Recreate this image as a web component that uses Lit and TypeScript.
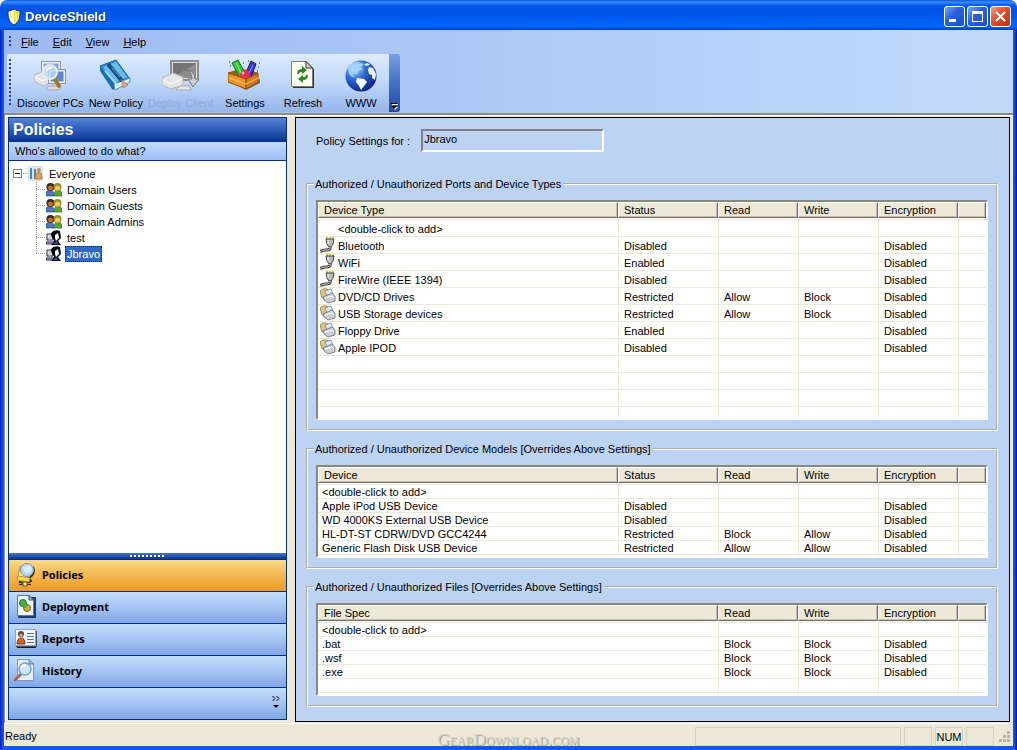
import { LitElement, html, svg, css, nothing } from "lit";
import { customElement, property } from "lit/decorators.js";
import { classMap } from "lit/directives/class-map.js";

const shieldIcon = html`<svg width="16" height="18" viewBox="0 0 16 18" aria-hidden="true">
  <path d="M8 1 C6 2 4 3 2 3 C2 10 3 14 8 17 C13 14 14 10 14 3 C12 3 10 2 8 1Z" fill="#fff" stroke="#1b3a6d" stroke-width="1"/>
  <path d="M8 2 C9.500 3 11 4 13 4 C13 10 12 13 8 16Z" fill="#f5e21c"/>
  <path d="M5 4 V11" stroke="#ffe96b" stroke-width="2"/>
  <path d="M10 5 V12" stroke="#fffbc0" stroke-width="1"/>
</svg>`;

const monitor = (x: number, y: number, w: number, h: number, screen: string) => svg`
  <rect x=${x} y=${y} width=${w} height=${h} fill="#f0f0f0" stroke="#8a97ad"/>
  <rect x=${x + 2} y=${y + 2} width=${w - 4} height=${h - 4} fill=${screen}/>`;

const toolIcons: Record<string, unknown> = {
  discover: svg`
    ${monitor(7.5, 2.5, 19, 16, "#7ea3dc")}
    <path d="M0 16 L10 12 L18 15 V23 L9 27 L0 22Z" fill="#e4e4e4" stroke="#b2b5bb"/>
    <path d="M1 18 L9 22 L17 17" fill="none" stroke="#fff"/>
    ${monitor(14.5, 10.5, 17, 14, "#5f88cc")}
    <ellipse cx="19" cy="29" rx="7" ry="2" fill="#dcdcdc" stroke="#aaa"/>
    <path d="M20 19 L25 27" stroke="#a4762d" stroke-width="4" stroke-linecap="round"/>
    <circle cx="16" cy="13" r="7" fill="#bfe0f5" fill-opacity=".8" stroke="#e2eef8" stroke-width="2"/>
    <path d="M12 12 Q14 8 18 9" stroke="#fff" stroke-width="2" fill="none"/>`,
  policy: svg`
    <path d="M1 7 L17 1 L31 20 L15 29Z" fill="#3193d2" stroke="#1a6198"/>
    <path d="M4 8 L17 3 L28 18 L15 24Z" fill="#67bdee"/>
    <path d="M1 7 L15 24 V31 L13 30 L1 12Z" fill="#1d6fae"/>
    <path d="M15 25 L31 19 V23 L16 31Z" fill="#e9f4fb" stroke="#4f8bb5"/>
    <path d="M9 5 L23 22" stroke="#1c4f86" stroke-width="4"/>
    <path d="M13 9 L21 18" stroke="#6aa6d6" stroke-width="1"/>
    <path d="M22 20 L29 26 L24 29Z" fill="#d5a98b" stroke="#815d4a" stroke-width=".5"/>
    <path d="M6 12 L19 27" stroke="#b5e0f8" stroke-width="1.500"/>`,
  deploy: svg`
    <rect x="9" y="2" width="27" height="19" fill="#dcdcdc" stroke="#8f8f8f" stroke-width="2"/>
    <rect x="11" y="4" width="23" height="15" fill="#747474"/>
    <path d="M11 19 L34 4 V19Z" fill="#8d8d8d"/>
    <path d="M0 19 L11 14 L21 18 V26 L9 30 L0 26Z" fill="#e6e6e6" stroke="#b5b5b5"/>
    <path d="M1 21 L9 25 L20 20" stroke="#fff" fill="none"/>
    <path d="M18 27 H27 L29 31 H14Z" fill="#e8e8e8" stroke="#aaa"/>
    <path d="M20 11 Q30 10 30 20 H26 L31 28 L37 20 H33 Q33 10 20 11Z" fill="#cfcfcf" stroke="#777"/>`,
  settings: svg`
    <path d="M6 24 L18 31 L32 24 V20 L19 25Z" fill="#6b6b70"/>
    <path d="M0 14 L13 10 L30 14 L18 20Z" fill="#a05c10" stroke="#7a4808" stroke-opacity=".7"/>
    <path d="M4 4 L10 1 L18 16 L12 19Z" fill="#35c535" stroke="#0a7a17"/>
    <path d="M8 4 L14 16" stroke="#a6f09c"/>
    <path d="M23 2 L28 5 L23 18 L17 16Z" fill="#3c3ccc" stroke="#15156e"/>
    <path d="M25 6 L20 16" stroke="#8a8af2"/>
    <circle cx="17" cy="16" r="5" fill="#ed2b4d"/><circle cx="15" cy="14" r="1.500" fill="#ffb0bd"/>
    <path d="M0 14 L18 20 V30 L0 23Z" fill="#f0942a" stroke="#8a4e0a"/>
    <path d="M18 20 L30 14 V23 L18 30Z" fill="#d9781a" stroke="#8a4e0a"/>
    <path d="M1 19 L18 25 L30 19" stroke="#ffce6d" fill="none"/>
    <path d="M2 7h1M1 3h1M15 4h1M30 8h1M20 2h1M29 12h1M31 4h1" stroke="#22228a"/>`,
  refresh: svg`
    <path d="M7 3 H21 L28 10 V29 H7Z" fill="#000" opacity=".75"/>
    <path d="M5.500 2.500 H20 L26.500 9 V27.500 H5.500Z" fill="#fffff0" stroke="#7c7c68"/>
    <path d="M20 2.500 V9 H26.500Z" fill="#d8d8d0" stroke="#333"/>
    <path d="M11 15 Q11 10 16 10 V7 L21 11 L16 15 V13 Q13 13 13 15Z" fill="#298b24"/>
    <path d="M22 16 Q22 21 17 21 V24 L12 20 L17 16 V18 Q20 18 20 16Z" fill="#298b24"/>`,
  www: svg`
    <defs><radialGradient id="globe" cx=".3" cy=".25" r=".9">
      <stop offset="0" stop-color="#a9dcff"/><stop offset=".4" stop-color="#2d6bd0"/><stop offset="1" stop-color="#050e78"/>
    </radialGradient></defs>
    <circle cx="17" cy="17" r="15.500" fill="url(#globe)"/>
    <path d="M4 9 Q8 3 14 3 L20 5 L17 8 L19 10 L15 12 L12 16 L9 14 L10 18 L13 20 L7 17 Q4 14 4 9Z" fill="#a9d6fa" opacity=".85"/>
    <path d="M13 19 L20 20 L23 23 L20 27 L17 31 L15 27 L12 23Z" fill="#fff"/>
    <path d="M25 8 L29 9 L32 15 L31 21 L28 19 L28 16 L25 15 L24 11Z" fill="#e9f5ff"/>
    <path d="M20 5 L24 4 L26 6 L22 7Z" fill="#d6edff"/>`,
};

const navIcons: Record<string, unknown> = {
  policies: svg`
    <path d="M6 4 L4 15 L15 19 L18 12Z" fill="#fbe88a" stroke="#c39a22"/>
    <path d="M19 5 Q22 12 15 16 L17 19 Q14 22 5 20" fill="none" stroke="#2f2a1a" stroke-width="2"/>
    <circle cx="13" cy="8" r="6.500" fill="#b9d7f3" stroke="#7f8fa3"/>
    <path d="M9 5 L16 3 L18 8 L12 12Z" fill="#dceefd"/>
    <path d="M4 14 L16 16 L15 20 L3 18Z" fill="#f7dc55" stroke="#c39a22"/>
    <path d="M5 22.500 H17" stroke="#2c2a20" stroke-width="1"/>
    <rect x="9" y="20" width="4" height="4" fill="#ffe673" stroke="#6c5a12"/>`,
  deployment: svg`
    <path d="M5 3 H22 V24 H4Z" fill="#1e3d66"/>
    <path d="M3.500 1.500 H15 L19.500 6 V21.500 H3.500Z" fill="#eef4fb" stroke="#5f7896"/>
    <path d="M15 1.500 V6 H19.500Z" fill="#9cb9dc" stroke="#456"/>
    <circle cx="9" cy="9" r="3.500" fill="#43b049" stroke="#23752a"/>
    <circle cx="13" cy="14" r="3.500" fill="#d0aa3a" stroke="#80621a"/>
    <circle cx="11" cy="12" r="2" fill="#58a83a"/>`,
  reports: svg`
    <path d="M3 21.500 H22" stroke="#1a1a1a" stroke-width="1"/>
    <path d="M22 5 V20 H2" stroke="#46546e" stroke-width="2" fill="none"/>
    <rect x="1.500" y="3.500" width="20" height="16" fill="#f4f8ff" stroke="#8ba4cd"/>
    <circle cx="7" cy="8" r="3" fill="#5c463c"/><circle cx="7" cy="9" r="1.500" fill="#e9b48e"/>
    <path d="M3 18 Q3 12 7 12 Q11 12 11 18Z" fill="#d3652a" stroke="#7d3513"/>
    <path d="M13 7.500 H20 M13 10.500 H20 M13 13.500 H20 M13 16.500 H20" stroke="#4d74b8"/>`,
  history: svg`
    <path d="M3.500 1.500 H15 L19.500 6 V22.500 H3.500Z" fill="#e5effc" stroke="#7c9ac6"/>
    <path d="M15 1.500 V6 H19.500Z" fill="#a5bfe6" stroke="#5f7eb0"/>
    <path d="M7 16 L1 22" stroke="#a5694e" stroke-width="3" stroke-linecap="round"/>
    <circle cx="11" cy="11" r="6" fill="#c9e8fb" stroke="#7f9dc1" stroke-width="1.500"/>
    <path d="M7 10 Q8 7 12 7" stroke="#fff" stroke-width="2" fill="none"/>`,
};

const smallIcons: Record<string, unknown> = {
  everyone: svg`
    <rect width="15" height="15" fill="#d8e7f5"/>
    <path d="M2 2h2v11H2z M6 3h2v10H6z" fill="#4e86b8"/>
    <circle cx="11" cy="4" r="2" fill="#c48d4f"/>
    <path d="M7 13 Q7 6 11 6 Q14 6 14 13Z" fill="#e0a04c" stroke="#a86d25" stroke-width=".7"/>`,
  group: svg`
    <path d="M0 14 V11 Q1 8 4 8 Q8 8 8 14Z" fill="#4a78c4" stroke="#27477f" stroke-width=".7"/>
    <path d="M8 14 Q8 8 12 8 Q15 8 16 11 V14Z" fill="#5aa53a" stroke="#2f6a1c" stroke-width=".7"/>
    <circle cx="4.500" cy="5" r="4" fill="#3b2414"/><circle cx="4.500" cy="6" r="2.500" fill="#b9703b"/>
    <circle cx="11.500" cy="5" r="4" fill="#9c8a22"/><circle cx="11.500" cy="6" r="2.500" fill="#ecc862"/>`,
  user: svg`
    <path d="M1 4h6v6H1z" fill="#fff" stroke="#223"/><path d="M2 5h4v4H2z" fill="#cfd6dd"/>
    <path d="M0 12 H9 V14 H0Z" fill="#c8c8d8" stroke="#224"/>
    <path d="M5 3 Q8 -1 14 1 L15 8 L12 11 L15 15 H5 Q8 12 8 10 Q5 8 5 3Z" fill="#050510"/>
    <path d="M9 5 L12 3 L13 8 L10 11 L9 8Z" fill="#fff"/>
    <path d="M6 14 L11 11 L12 14Z" fill="#30499c"/>`,
  plug: svg`
    <path d="M6 1h8" stroke="#d6cf2a" stroke-width="2" stroke-dasharray="2 1"/>
    <path d="M6 2 H14 L13 7 L11 10 H9 L7 7Z" fill="#bdbdbd" stroke="#444"/>
    <path d="M8 3 V7" stroke="#fff"/>
    <path d="M10 10 Q11 13 6 13 Q2 13 0 15" stroke="#3d3d3d" stroke-width="3" fill="none"/>
    <path d="M10 10 Q11 13 6 13 Q2 13 0 15" stroke="#d5d5d5" stroke-width="1" fill="none"/>`,
  drive: svg`
    <path d="M0 3 Q4 -1 8 2 L7 9 L2 10Z" fill="#d9c682" stroke="#8f7e44" stroke-width=".8"/>
    <path d="M5 3 L11 1 L13 6 L7 8Z" fill="#dceaf4" stroke="#76889a" stroke-width=".8"/>
    <path d="M3 9 L12 5 L15 8 V13 L8 15 L4 12Z" fill="#c9cdd0" stroke="#666d75" stroke-width=".8"/>
    <path d="M5 10 L12 8 L14 10" stroke="#fff" fill="none"/>`,
};

@customElement("small-icon")
class SmallIcon extends LitElement {
  @property() name = "";
  static styles = css`
    :host { display: block; flex: none; width: 16px; height: 16px; }
    svg { display: block; }
  `;
  render() {
    return html`<svg width="16" height="16" viewBox="0 0 16 16" aria-hidden="true">${smallIcons[this.name]}</svg>`;
  }
}

interface Column { label: string; width?: number; }
interface Row { cells: string[]; icon?: string; }

@customElement("policy-table")
class PolicyTable extends LitElement {
  @property({ attribute: false }) columns: Column[] = [];
  @property({ attribute: false }) rows: Row[] = [];
  @property({ type: Boolean }) icons = false;

  static styles = css`
    :host {
      display: block;
      background: #fff;
      border: 2px solid;
      border-color: #8a887c #fff #fff #8a887c;
      padding-bottom: 1px;
    }
    table { width: 100%; table-layout: fixed; border-collapse: separate; border-spacing: 0; }
    th, td { padding: 0; font-weight: normal; text-align: left; white-space: nowrap; box-sizing: border-box; overflow: hidden; }
    th { height: 18px; padding-bottom: 1px; border-bottom: 1px solid #ece9d8; }
    .head {
      display: block;
      box-sizing: border-box;
      height: 16px;
      line-height: 14px;
      padding-left: 5px;
      background: #ece9d8;
      border: 1px solid;
      border-color: #fff #716f64 #716f64 #fff;
      box-shadow: inset -1px -1px #c5c2b2;
    }
    td { height: 14px; line-height: 11px; padding: 2px 0 0 5px; border-bottom: 1px solid #ece9d8; }
    td + td { border-left: 1px solid #ece9d8; }
    td:first-child { padding-left: 4px; }
    .icons td { height: 17px; line-height: 14px; }
    .icons td:first-child { padding-top: 0; padding-left: 2px; }
    .icons tr:last-child td { height: 10px; padding-top: 0; border-bottom: 0; }
    .name { display: flex; gap: 2px; height: 16px; line-height: 18px; }
    .pad { width: 16px; }
  `;

  private cell(text: string, index: number, row: Row) {
    if (!this.icons || index > 0 || !text) return html`<td>${text}</td>`;
    return html`<td><div class="name">
      ${row.icon ? html`<small-icon name=${row.icon}></small-icon>` : html`<span class="pad"></span>`}
      <span>${text}</span></div></td>`;
  }

  render() {
    return html`<table class=${classMap({ icons: this.icons })}>
      <colgroup>${this.columns.map((c) => html`<col width=${c.width ?? nothing}>`)}</colgroup>
      <thead><tr>${this.columns.map((c) => html`<th scope="col"><span class="head">${c.label}</span></th>`)}</tr></thead>
      <tbody>${this.rows.map((r) => html`<tr>${this.columns.map((_, i) => this.cell(r.cells[i] ?? "", i, r))}</tr>`)}</tbody>
    </table>`;
  }
}

const deviceColumns = (first: string): Column[] => [
  { label: first }, { label: "Status", width: 100 }, { label: "Read", width: 80 },
  { label: "Write", width: 80 }, { label: "Encryption", width: 80 }, { label: "", width: 28 },
];
const fileColumns: Column[] = [
  { label: "File Spec" }, { label: "Read", width: 80 }, { label: "Write", width: 80 },
  { label: "Encryption", width: 80 }, { label: "", width: 28 },
];
const portRows: Row[] = [
  { cells: ["<double-click to add>"] },
  { icon: "plug", cells: ["Bluetooth", "Disabled", "", "", "Disabled"] },
  { icon: "plug", cells: ["WiFi", "Enabled", "", "", "Disabled"] },
  { icon: "plug", cells: ["FireWire (IEEE 1394)", "Disabled", "", "", "Disabled"] },
  { icon: "drive", cells: ["DVD/CD Drives", "Restricted", "Allow", "Block", "Disabled"] },
  { icon: "drive", cells: ["USB Storage devices", "Restricted", "Allow", "Block", "Disabled"] },
  { icon: "drive", cells: ["Floppy Drive", "Enabled", "", "", "Disabled"] },
  { icon: "drive", cells: ["Apple IPOD", "Disabled", "", "", "Disabled"] },
  { cells: [] }, { cells: [] }, { cells: [] }, { cells: [] },
];
const modelRows: Row[] = [
  { cells: ["<double-click to add>"] },
  { cells: ["Apple iPod USB Device", "Disabled", "", "", "Disabled"] },
  { cells: ["WD 4000KS External USB Device", "Disabled", "", "", "Disabled"] },
  { cells: ["HL-DT-ST CDRW/DVD GCC4244", "Restricted", "Block", "Allow", "Disabled"] },
  { cells: ["Generic Flash Disk USB Device", "Restricted", "Allow", "Allow", "Disabled"] },
];
const fileRows: Row[] = [
  { cells: ["<double-click to add>"] },
  { cells: [".bat", "Block", "Block", "Disabled"] },
  { cells: [".wsf", "Block", "Block", "Disabled"] },
  { cells: [".exe", "Block", "Block", "Disabled"] },
  { cells: [] },
];
const tools = [
  { id: "discover", label: "Discover PCs" },
  { id: "policy", label: "New Policy" },
  { id: "deploy", label: "Deploy Client", disabled: true },
  { id: "settings", label: "Settings" },
  { id: "refresh", label: "Refresh" },
  { id: "www", label: "WWW" },
];
const treeItems = [
  { icon: "group", label: "Domain Users" },
  { icon: "group", label: "Domain Guests" },
  { icon: "group", label: "Domain Admins" },
  { icon: "user", label: "test" },
  { icon: "user", label: "Jbravo", selected: true },
];
const navItems = [
  { id: "policies", label: "Policies", active: true },
  { id: "deployment", label: "Deployment" },
  { id: "reports", label: "Reports" },
  { id: "history", label: "History" },
];

@customElement("app-root")
class AppRoot extends LitElement {
  static styles = css`
    :host {
      display: block;
      font: 11px "Liberation Sans", Arial, sans-serif;
      color: #000;
      cursor: default;
    }
    button { font: inherit; color: inherit; background: none; border: 0; padding: 0; margin: 0; }
    svg { display: block; }
    ul { list-style: none; margin: 0; padding: 0; }
    .window {
      display: flex;
      flex-direction: column;
      box-sizing: border-box;
      min-height: 100vh;
      background: #0831d9;
    }
    .titlebar {
      display: flex;
      align-items: center;
      box-sizing: border-box;
      height: 30px;
      padding: 3px 6px 0 6px;
      gap: 3px;
      background: linear-gradient(#0a55d8 0, #3c8cf8 2px, #0a5ff0 5px, #0054e3 9px, #0058ea 17px, #0066ff 25px, #0060f4 27px, #003fc0 30px);
      color: #fff;
      border-radius: 7px 7px 0 0;
    }
    .corners { background: #fff; }
    .title { flex: 1; margin: 0; font: bold 13px/18px "Liberation Sans", Arial, sans-serif; text-shadow: 1px 1px #0a246a; }
    .captions { display: flex; gap: 2px; }
    .caption {
      display: grid;
      place-items: center;
      box-sizing: border-box;
      width: 21px;
      height: 21px;
      border: 1px solid #fff;
      border-radius: 3px;
      background: linear-gradient(135deg, #7ea6f7, #2b61e3 40%, #1b4ecb);
    }
    .close { background: linear-gradient(135deg, #f0a083, #dc4f2c 45%, #b93512); }
    .frame {
      flex: 1;
      display: flex;
      flex-direction: column;
      border: solid #0a3cdc;
      border-width: 0 4px 4px 4px;
      border-image: linear-gradient(90deg, #0019c0, #1058ee 3px, #1058ee calc(100% - 3px), #0014a0) 4;
      background: #ece9d8;
    }
    .bars { background: linear-gradient(90deg, #9dbaf1, #a9c5f5 35%, #c3dafa); padding-bottom: 1px; }
    .menubar { display: flex; align-items: center; height: 24px; padding-left: 5px; gap: 5px; }
    .menus { display: flex; gap: 4px; }
    .menu { padding: 0 5px; }
    .menu u { text-underline-offset: 1px; }
    .grip { width: 2px; height: 12px; background: repeating-linear-gradient(#27418c 0 2px, transparent 2px 4px); }
    .toolrow { display: flex; padding-left: 3px; }
    .toolbar {
      display: flex;
      align-items: center;
      height: 58px;
      padding-left: 2px;
      gap: 1px;
      background: linear-gradient(#dceafd, #c4dafa 45%, #94b5ec);
      border-radius: 3px 0 0 3px;
    }
    .toolbar .grip { height: 48px; margin-right: 3px; }
    .tool {
      display: flex;
      flex-direction: column;
      align-items: center;
      min-width: 57px;
      padding: 2px 2px 0;
      gap: 4px;
      line-height: 14px;
      white-space: nowrap;
    }
    .tool:disabled { color: #92aad6; }
    .overflow {
      display: flex;
      align-items: flex-end;
      justify-content: center;
      width: 11px;
      padding-bottom: 2px;
      background: linear-gradient(#769fe6, #4272c8 50%, #234a9c);
      border-radius: 0 3px 3px 0;
    }
    .body {
      flex: 1;
      display: flex;
      gap: 8px;
      padding: 2px 3px 1px 2px;
      border: solid #8f8d80;
      border-width: 2px 0 0 1px;
      box-shadow: inset 1px 1px #fff;
    }
    .sidebar {
      flex: 0 0 279px;
      box-sizing: border-box;
      display: flex;
      flex-direction: column;
      border: 1px solid #00307f;
      margin-left: 1px;
      margin-bottom: 2px;
      background: #fff;
    }
    .side-title {
      margin: 0;
      padding-left: 4px;
      font: bold 16px/24px "Liberation Sans", Arial, sans-serif;
      color: #fff;
      background: linear-gradient(#5583d6, #2c5bb8 50%, #06308f);
    }
    .side-sub {
      margin: 0;
      padding-left: 6px;
      line-height: 18px;
      background: linear-gradient(#c3daf9, #9dbdf5);
      border-bottom: 1px solid #00307f;
    }
    .tree { flex: 1; padding: 5px 4px; line-height: 16px; }
    .node { display: flex; align-items: center; height: 16px; }
    .item { margin-left: 3px; padding: 0 1px; line-height: 14px; border: 1px solid transparent; }
    .selected { background: #316ac5; color: #fff; border: 1px dotted #16283f; }
    .branch { padding-left: 23px; }
    .splitter { display: grid; place-items: center; height: 6px; background: linear-gradient(#4676c8, #0a358f); }
    .dots { width: 36px; height: 2px; background: repeating-linear-gradient(90deg, #fff 0 2px, transparent 2px 4px); }
    .nav {
      display: flex;
      align-items: center;
      gap: 4px;
      width: 100%;
      height: 32px;
      padding: 0 0 2px 5px;
      border-top: 1px solid #002d96;
      background: linear-gradient(#c4dcfb, #a9c7f3 45%, #7fa5e2);
      font: bold 11px "Noto Sans", Verdana, sans-serif;
    }
    .active { background: linear-gradient(#fbdb8c, #f6bd57 40%, #ec9a26); }
    .more { justify-content: flex-end; padding-right: 6px; }
    .main {
      flex: 1;
      min-width: 0;
      box-sizing: border-box;
      border: 1px solid #000;
      background: #bdd3f3;
      padding: 11px 11px 3px 10px;
    }
    .field { display: flex; align-items: center; gap: 11px; padding-left: 10px; margin-bottom: 25px; }
    .field input {
      box-sizing: border-box;
      width: 183px;
      height: 23px;
      margin: 0;
      padding: 0 1px 4px;
      font: inherit;
      color: #000;
      background: #bdd3f3;
      border: 2px solid;
      border-color: #7b7f86 #fff #fff #7b7f86;
      outline: 0;
    }
    fieldset { min-width: 0; margin: 0 0 11px; padding: 9px 8px; border: 2px groove #fff; }
    legend { margin-left: -2px; padding: 0 2px 0 1px; line-height: 14px; }
    .status {
      position: relative;
      display: flex;
      gap: 3px;
      box-sizing: border-box;
      height: 23px;
      padding: 3px 2px 0 1px;
      border-top: 1px solid #fff;
      line-height: 19px;
    }
    .ready { flex: 1; }
    .mark {
      position: absolute;
      inset: 6px 0 0 0;
      text-align: center;
      pointer-events: none;
      font: small-caps 17px/20px "Liberation Serif", "Times New Roman", serif;
      color: #d2cfc3;
      text-shadow: 1px 1px #aaa89b;
    }
    .pane { box-sizing: border-box; width: 28px; border: 1px solid #d6d2c2; line-height: 18px; text-align: center; }
    .wide { width: 206px; }
  `;

  render() {
    return html`<div class="window">
      <div class="corners"><header class="titlebar">
        ${shieldIcon}
        <h1 class="title">DeviceShield</h1>
        <div class="captions">
          <button class="caption" aria-label="Minimize"><svg width="13" height="13"><path d="M1 9h7v3H1z" fill="#fff"/></svg></button>
          <button class="caption" aria-label="Maximize"><svg width="13" height="13"><path d="M1 1h11v11H1zM2 4v7h9V4z" fill="#fff" fill-rule="evenodd"/></svg></button>
          <button class="caption close" aria-label="Close"><svg width="13" height="13"><path d="M2 2 L11 11 M11 2 L2 11" stroke="#fff" stroke-width="2"/></svg></button>
        </div>
      </header></div>
      <div class="frame">
        <div class="bars">
          <nav class="menubar" aria-label="Menu">
            <span class="grip"></span>
            <div class="menus">${["File", "Edit", "View", "Help"].map((m) => html`<button class="menu"><u>${m[0]}</u>${m.slice(1)}</button>`)}</div>
          </nav>
          <div class="toolrow">
            <div class="toolbar" role="toolbar">
              <span class="grip"></span>
              ${tools.map((t) => html`<button class="tool" ?disabled=${t.disabled}>
                <svg width=${t.disabled ? 38 : 33} height="33" aria-hidden="true">${toolIcons[t.id]}</svg>${t.label}</button>`)}
            </div>
            <button class="overflow" aria-label="Toolbar options"><svg width="7" height="7"><path d="M1 1.500h6" stroke="#fff"/><path d="M0 .500h6" stroke="#000"/><path d="M1 4h6L4 7z" fill="#fff"/><path d="M0 3h6L3 6z" fill="#000"/></svg></button>
          </div>
        </div>
        <div class="body">
          <aside class="sidebar">
            <h2 class="side-title">Policies</h2>
            <p class="side-sub">Who's allowed to do what?</p>
            <ul class="tree">
              <li>
                <div class="node">
                  <button aria-label="Collapse" aria-expanded="true"><svg width="15" height="16" aria-hidden="true"><rect x=".500" y="3.500" width="8" height="8" fill="#fff" stroke="#848484"/><path d="M2 7.500h5" stroke="#000"/><path d="M10 7.500h5" stroke="#999" stroke-dasharray="1 1"/></svg></button>
                  <small-icon name="everyone"></small-icon>
                  <button class="item">Everyone</button>
                </div>
                <ul class="branch">
                  ${treeItems.map((t, i) => html`<li class="node">
                    <svg width="10" height="16" aria-hidden="true"><path d="M.500 0v${i === treeItems.length - 1 ? 8 : 16}M0 7.500h10" stroke="#999" stroke-dasharray="1 1"/></svg>
                    <small-icon name=${t.icon}></small-icon>
                    <button class=${classMap({ item: true, selected: !!t.selected })}>${t.label}</button>
                  </li>`)}
                </ul>
              </li>
            </ul>
            <div class="splitter"><span class="dots"></span></div>
            ${navItems.map((n) => html`<button class=${classMap({ nav: true, active: !!n.active })}>
              <svg width="24" height="25" aria-hidden="true">${navIcons[n.id]}</svg>${n.label}</button>`)}
            <button class="nav more" aria-label="Configure buttons"><svg width="8" height="14"><path d="M.500 0 L3 2.500 L.500 5 M4.500 0 L7 2.500 L4.500 5" stroke="#000" fill="none"/><path d="M1 9h6L4 12z"/></svg></button>
          </aside>
          <main class="main">
            <div class="field">
              <label for="policy">Policy Settings for :</label>
              <input id="policy" type="text" readonly value="Jbravo">
            </div>
            <fieldset>
              <legend>Authorized / Unauthorized Ports and Device Types</legend>
              <policy-table icons .columns=${deviceColumns("Device Type")} .rows=${portRows}></policy-table>
            </fieldset>
            <fieldset>
              <legend>Authorized / Unauthorized Device Models [Overrides Above Settings]</legend>
              <policy-table .columns=${deviceColumns("Device")} .rows=${modelRows}></policy-table>
            </fieldset>
            <fieldset>
              <legend>Authorized / Unauthorized Files [Overrides Above Settings]</legend>
              <policy-table .columns=${fileColumns} .rows=${fileRows}></policy-table>
            </fieldset>
          </main>
        </div>
        <footer class="status">
          <span class="ready">Ready</span>
          <span class="pane wide"></span><span class="pane"></span><span class="pane">NUM</span><span class="pane"></span>
          <svg width="14" height="16" aria-hidden="true"><path d="M10 4h3v3h-3zM6 8h3v3H6zM10 8h3v3h-3zM2 12h3v3H2zM6 12h3v3H6zM10 12h3v3h-3z" fill="#b8b4a2"/></svg>
          <span class="mark">GearDownload.com</span>
        </footer>
      </div>
    </div>`;
  }
}
